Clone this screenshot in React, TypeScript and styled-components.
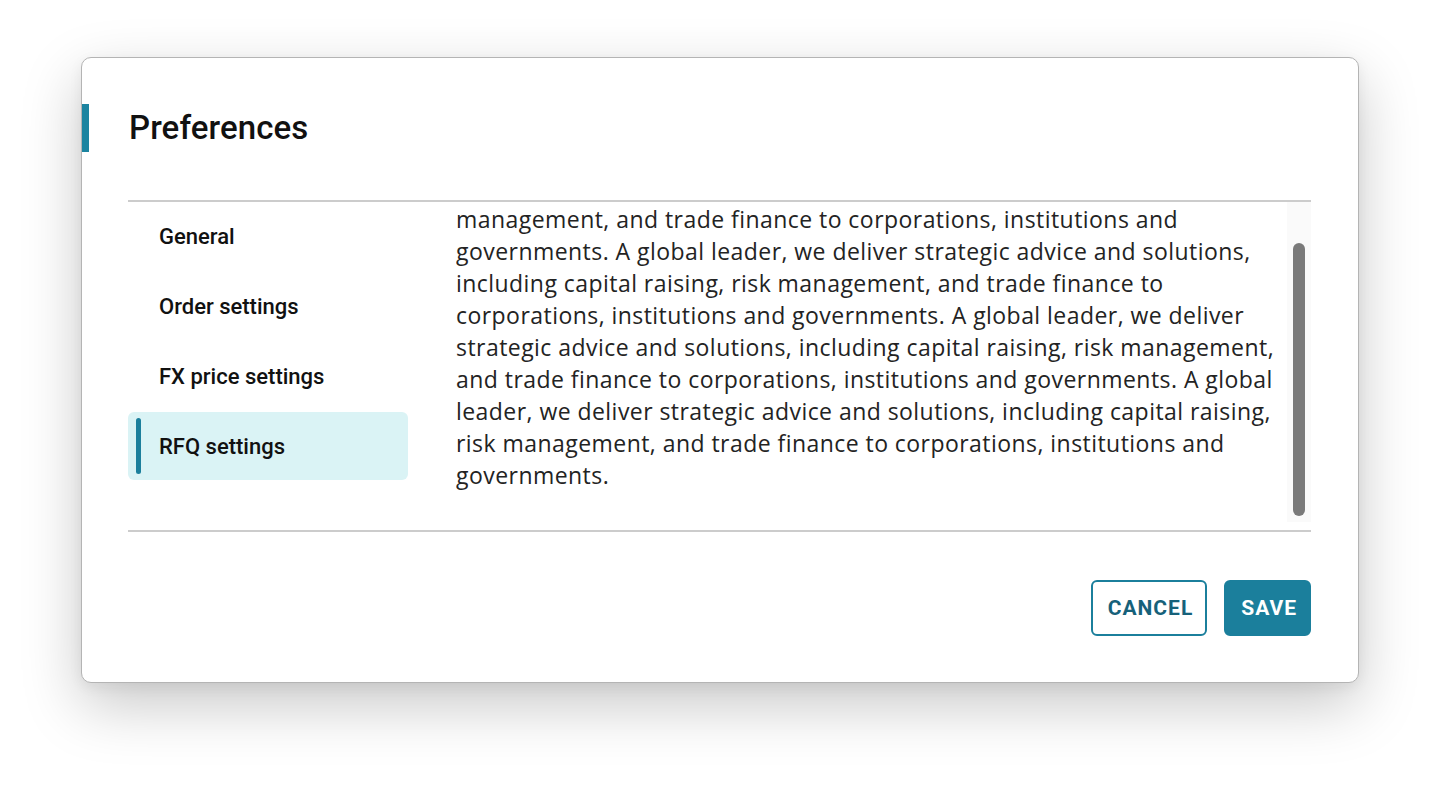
import React from "react";
import styled, { createGlobalStyle, css } from "styled-components";

const Global = createGlobalStyle`
  html, body { margin: 0; padding: 0; background: #ffffff; }
  body { font-family: "Open Sans", "Noto Sans", sans-serif; }
  * { box-sizing: border-box; }
`;

const Page = styled.div`
  width: 1440px;
  height: 788px;
  display: flex;
  justify-content: center;
  align-items: flex-start;
  padding-top: 57px;
  overflow: hidden;
`;

const Dialog = styled.div`
  width: 1278px;
  height: 626px;
  background: #ffffff;
  border: 1px solid #b4b4b4;
  border-radius: 10px;
  box-shadow: 0 22px 60px rgba(0, 0, 0, 0.22), 0 4px 14px rgba(0, 0, 0, 0.06);
  padding: 0 47px 0 46px;
  display: flex;
  flex-direction: column;
`;

const Header = styled.header`
  display: flex;
  align-items: center;
  gap: 40px;
  margin-left: -46px;
  padding: 46px 0 48px;
  &::before {
    content: "";
    display: block;
    width: 7px;
    height: 48px;
    background: #1c84a0;
  }
`;

const Title = styled.h1`
  margin: 0;
  font-family: Roboto, "Noto Sans", sans-serif;
  font-weight: 500;
  font-size: 33px;
  line-height: 40px;
  color: #111111;
  letter-spacing: 0.1px;
`;

const Body = styled.div`
  display: grid;
  grid-template-columns: 280px 1fr;
  column-gap: 48px;
  border-top: 2px solid #cccccc;
  border-bottom: 2px solid #cccccc;
  padding-bottom: 8px;
`;

const Nav = styled.nav`
  display: flex;
  flex-direction: column;
  gap: 2px;
`;

const NavItem = styled.div<{ $active?: boolean }>`
  position: relative;
  height: 68px;
  display: flex;
  align-items: center;
  padding-left: 31px;
  border-radius: 6px;
  font-family: Roboto, "Noto Sans", sans-serif;
  font-weight: 500;
  font-size: 22px;
  color: #111111;
  ${(p) =>
    p.$active &&
    css`
      background: #daf3f5;
      &::before {
        content: "";
        position: absolute;
        left: 8px;
        top: 6px;
        bottom: 6px;
        width: 5px;
        border-radius: 3px;
        background: #1b7f9c;
      }
    `}
`;

const ScrollArea = styled.div`
  height: 320px;
  display: flex;
`;

const Viewport = styled.div`
  flex: 1;
  overflow: hidden;
  padding-top: 1px;
  font-family: "Open Sans", "Noto Sans", sans-serif;
  font-size: 23px;
  line-height: 32px;
  letter-spacing: 0.45px;
  color: #232323;
`;

const Paragraph = styled.p`
  margin: 0;
`;

const Track = styled.div`
  width: 24px;
  flex: none;
  background: #fafafa;
  padding: 41px 6px 0;
`;

const Thumb = styled.div`
  width: 12px;
  height: 273px;
  border-radius: 6px;
  background: #7a7a7a;
`;

const Footer = styled.footer`
  display: flex;
  justify-content: flex-end;
  gap: 17px;
  padding-top: 48px;
`;

const Button = styled.button<{ $primary?: boolean }>`
  height: 56px;
  padding: 0 12px 0 15px;
  border-radius: 6px;
  border: 2px solid #1b7f9c;
  font-family: Roboto, "Noto Sans", sans-serif;
  font-weight: 700;
  font-size: 21px;
  letter-spacing: 1px;
  cursor: pointer;
  background: ${(p) => (p.$primary ? "#1b7f9c" : "#ffffff")};
  color: ${(p) => (p.$primary ? "#ffffff" : "#16617a")};
`;

const sentence =
  "A global leader, we deliver strategic advice and solutions, including capital raising, risk management, and trade finance to corporations, institutions and governments.";

export default function App() {
  const items = ["General", "Order settings", "FX price settings", "RFQ settings"];

  return (
    <>
      <Global />
      <Page>
        <Dialog>
          <Header>
            <Title>Preferences</Title>
          </Header>
          <Body>
            <Nav>
              {items.map((label) => (
                <NavItem key={label} $active={label === "RFQ settings"}>
                  {label}
                </NavItem>
              ))}
            </Nav>
            <ScrollArea>
              <Viewport>
                <Paragraph>
                  management, and trade finance to corporations, institutions and governments. {sentence} {sentence}{" "}
                  {sentence}
                </Paragraph>
              </Viewport>
              <Track>
                <Thumb />
              </Track>
            </ScrollArea>
          </Body>
          <Footer>
            <Button>CANCEL</Button>
            <Button $primary>SAVE</Button>
          </Footer>
        </Dialog>
      </Page>
    </>
  );
}
